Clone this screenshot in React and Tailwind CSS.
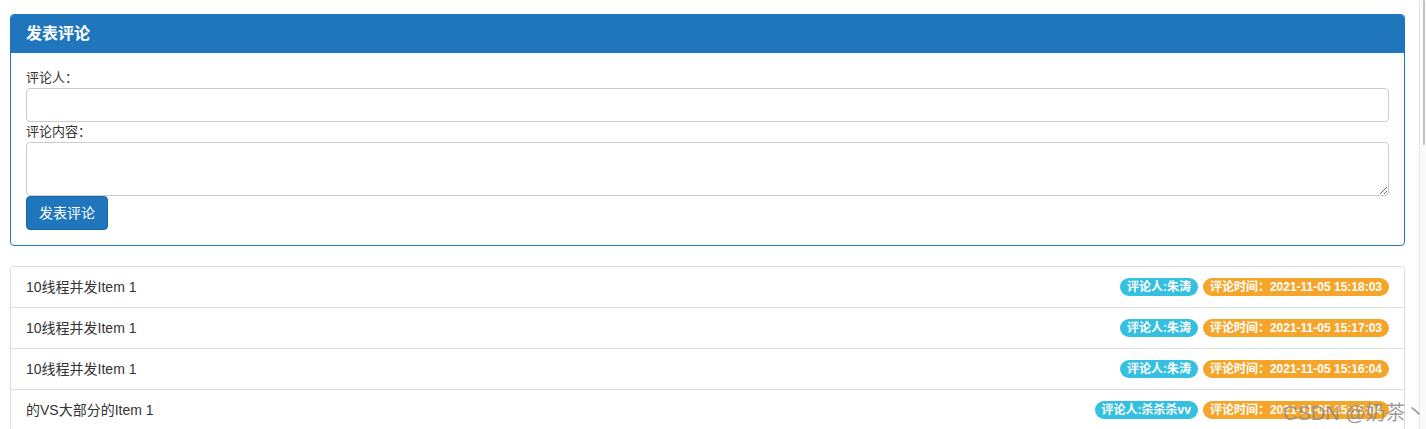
import React from 'react';

const comments = [
  { title: '10线程并发Item 1', user: '朱涛', time: '2021-11-05 15:18:03' },
  { title: '10线程并发Item 1', user: '朱涛', time: '2021-11-05 15:17:03' },
  { title: '10线程并发Item 1', user: '朱涛', time: '2021-11-05 15:16:04' },
  { title: '的VS大部分的Item 1', user: '杀杀杀vv', time: '2021-11-05 15:15:04' },
];

function Badge({ color, children }) {
  return (
    <span className={`${color} text-white text-[12px] font-bold leading-[18px] h-[18px] px-[7px] rounded-full whitespace-nowrap`}>
      {children}
    </span>
  );
}

export default function App() {
  return (
    <div
      className="relative flex h-[429px] overflow-hidden bg-white text-[#333] text-[14px]"
      style={{ fontFamily: '"Liberation Sans", "Noto Sans CJK SC", sans-serif' }}
    >
      <div className="flex-1 pl-[10px] pr-[14px] pt-[14px]">
        {/* Comment form panel */}
        <div className="border border-[#1f76bc] rounded-[4px] overflow-hidden">
          <div className="bg-[#1f76bc] text-white text-[16px] font-bold px-[15px] h-[38px] flex items-center">
            发表评论
          </div>
          <div className="px-[15px] pt-[15px] pb-[15px]">
            <label className="block leading-[20px] text-[13px]">评论人：</label>
            <input className="block w-full h-[34px] border border-[#ccc] rounded-[4px] px-3 outline-none" />
            <label className="block leading-[20px] text-[13px]">评论内容：</label>
            <textarea className="block w-full h-[54px] border border-[#ccc] rounded-[4px] px-3 py-1 outline-none" />
            <button className="block h-[34px] px-[12px] bg-[#1f76bc] border border-[#1a68a8] text-white text-[14px] rounded-[4px]">
              发表评论
            </button>
          </div>
        </div>

        {/* Comment list */}
        <div className="mt-[20px] border border-[#ddd] rounded-[4px]">
          {comments.map((c, i) => (
            <div
              key={i}
              className={`flex items-center justify-between px-[15px] h-[40px] ${i > 0 ? 'border-t border-[#ddd] h-[41px]' : ''}`}
            >
              <span>{c.title}</span>
              <div className="flex items-center gap-[5px]">
                <Badge color="bg-[#35bfe0]">评论人:{c.user}</Badge>
                <Badge color="bg-[#f6a52b]">评论时间：{c.time}</Badge>
              </div>
            </div>
          ))}
        </div>
      </div>

      {/* scrollbar */}
      <div className="w-[7px] border-l border-[#e6e6e6] bg-[#fafafa] flex justify-end">
        <div className="w-[2px] h-[145px] bg-[#c4c4c4] rounded-full mr-[1px]" />
      </div>

      {/* watermark */}
      <div className="absolute left-[1283px] top-[398px] text-[20px] text-[#8a8a8a]/85 whitespace-nowrap pointer-events-none">
        CSDN @奶茶丶
      </div>
    </div>
  );
}
